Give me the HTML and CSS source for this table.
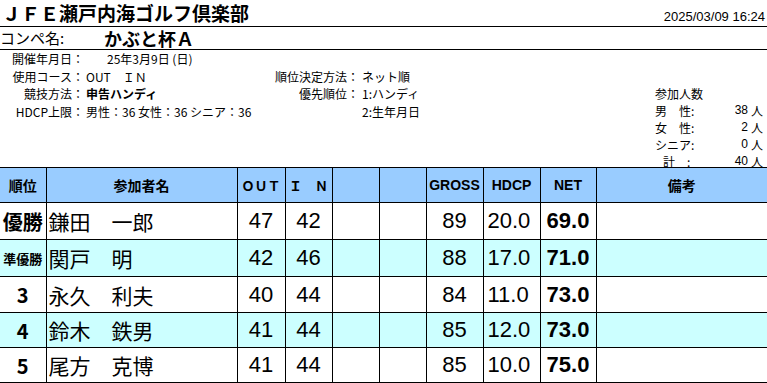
FILE: index.html
```html
<!DOCTYPE html>
<html lang="ja">
<head>
<meta charset="utf-8">
<title>かぶと杯Ａ 成績表</title>
<link rel="stylesheet" href="styles.css">
</head>
<body>
<div class="page">
  <header class="top">
    <h1 class="club">ＪＦＥ瀬戸内海ゴルフ倶楽部</h1>
    <div class="stamp">2025/03/09 16:24</div>
  </header>
  <div class="comp">
    <span class="comp-label">コンペ名:</span>
    <span class="comp-name">かぶと杯Ａ</span>
  </div>
  <section class="info">
    <div class="info-grid">
      <div class="lbl">開催年月日：</div><div class="val val-date">25年3月9日 (日)</div><div></div><div></div>
      <div class="lbl">使用コース：</div><div class="val">OUT　ＩＮ</div><div class="lbl">順位決定方法：</div><div class="val2">ネット順</div>
      <div class="lbl">競技方法：</div><div class="val strong">申告ハンディ</div><div class="lbl">優先順位：</div><div class="val2">1:ハンディ</div>
      <div class="lbl">HDCP上限：</div><div class="val">男性：36 女性：36 シニア：36</div><div></div><div class="val2">2:生年月日</div>
    </div>
    <div class="count">
      <div class="count-title">参加人数</div>
      <div class="count-row"><span class="ck">男　性:</span><span class="cn">38</span><span class="cu">人</span></div>
      <div class="count-row"><span class="ck">女　性:</span><span class="cn">2</span><span class="cu">人</span></div>
      <div class="count-row"><span class="ck">シニア:</span><span class="cn">0</span><span class="cu">人</span></div>
      <div class="count-row"><span class="ck ck-total">計　:</span><span class="cn">40</span><span class="cu">人</span></div>
    </div>
  </section>
  <table class="result">
    <colgroup>
      <col class="c-rank"><col class="c-name"><col class="c-out"><col class="c-in"><col class="c-x"><col class="c-x">
      <col class="c-gross"><col class="c-hdcp"><col class="c-net"><col class="c-note">
    </colgroup>
    <thead>
      <tr>
        <th>順位</th><th>参加者名</th><th class="fw">ＯＵＴ</th><th class="fw">Ｉ　Ｎ</th><th></th><th></th>
        <th class="lat">GROSS</th><th class="lat">HDCP</th><th class="lat">NET</th><th class="note">備考</th>
      </tr>
    </thead>
    <tbody>
      <tr>
        <td class="rank">優勝</td><td class="name">鎌田　一郎</td><td class="num">47</td><td class="num">42</td><td></td><td></td>
        <td class="num">89</td><td class="hdcp">20.0</td><td class="net">69.0</td><td class="note"></td>
      </tr>
      <tr class="alt">
        <td class="rank rank-sm">準優勝</td><td class="name">関戸　明</td><td class="num">42</td><td class="num">46</td><td></td><td></td>
        <td class="num">88</td><td class="hdcp">17.0</td><td class="net">71.0</td><td class="note"></td>
      </tr>
      <tr>
        <td class="rank">3</td><td class="name">永久　利夫</td><td class="num">40</td><td class="num">44</td><td></td><td></td>
        <td class="num">84</td><td class="hdcp">11.0</td><td class="net">73.0</td><td class="note"></td>
      </tr>
      <tr class="alt">
        <td class="rank">4</td><td class="name">鈴木　鉄男</td><td class="num">41</td><td class="num">44</td><td></td><td></td>
        <td class="num">85</td><td class="hdcp">12.0</td><td class="net">73.0</td><td class="note"></td>
      </tr>
      <tr>
        <td class="rank">5</td><td class="name">尾方　克博</td><td class="num">41</td><td class="num">44</td><td></td><td></td>
        <td class="num">85</td><td class="hdcp">10.0</td><td class="net">75.0</td><td class="note"></td>
      </tr>
    </tbody>
  </table>
</div>
</body>
</html>
```

FILE: styles.css
```css
html, body {
  margin: 0;
  padding: 0;
  background: #fff;
  overflow: hidden;
}
body {
  font-family: "Liberation Sans", "Noto Sans CJK JP", sans-serif;
  color: #000;
}
.page {
  width: 767px;
}

/* title row */
.top {
  display: flex;
  justify-content: space-between;
  align-items: flex-end;
  height: 26px;
  border-bottom: 1px solid #000;
}
.club {
  margin: 0 0 0 2px;
  font: bold 19px/26px "Noto Sans CJK JP", sans-serif;
  align-self: center;
}
.stamp {
  font-size: 13px;
  line-height: 15px;
  margin: 0 2px 2px 0;
}

/* competition name */
.comp {
  display: flex;
  align-items: center;
  height: 22px;
  border-bottom: 1px solid #000;
}
.comp-label {
  width: 104px;
  font: 15px/20px "Noto Sans CJK JP", sans-serif;
}
.comp-name {
  font: bold 18px/20px "Noto Sans CJK JP", sans-serif;
}

/* info block */
.info {
  display: flex;
  height: 117px;
  font-size: 12px;
  font-family: "Noto Sans CJK JP", sans-serif;
}
.info-grid {
  flex: 1;
  display: grid;
  grid-template-columns: 84px 191px 84px 1fr;
  grid-auto-rows: 17.5px;
  align-items: center;
  line-height: 15px;
  white-space: nowrap;
}
.lbl {
  text-align: right;
}
.val {
  padding-left: 2px;
}
.val-date {
  padding-left: 23px;
}
.val2 {
  padding-left: 3px;
}
.strong {
  font-weight: bold;
}

.count {
  width: 112px;
  margin-top: 35px;
  line-height: 17px;
}
.count-row {
  display: flex;
}
.ck {
  width: 48px;
}
.ck-total {
  padding-left: 8px;
  width: 40px;
}
.cn {
  width: 45px;
  text-align: right;
  font-family: "Liberation Sans", sans-serif;
}
.cu {
  padding-left: 3px;
}

/* results table */
.result {
  width: 767px;
  border-collapse: collapse;
  table-layout: fixed;
}
.c-rank { width: 46px; }
.c-name { width: 191px; }
.c-out { width: 48px; }
.c-in { width: 47px; }
.c-x { width: 47px; }
.c-gross { width: 57px; }
.c-hdcp { width: 57px; }
.c-net { width: 56px; }

.result th,
.result td {
  border: 1px solid #000;
  padding: 0;
  overflow: hidden;
  white-space: nowrap;
}
.result th:first-child,
.result td:first-child {
  border-left: none;
}
.result th:last-child,
.result td:last-child {
  border-right: none;
}
.result thead tr {
  height: 35px;
  background: #99ccff;
}
.result th {
  font: bold 14px "Noto Sans CJK JP", sans-serif;
  text-align: center;
}
.result th.fw {
  font-size: 13px;
}
.result th.lat {
  font-family: "Liberation Sans", sans-serif;
}
.result tbody tr {
  height: 36px;
}
.result tbody tr:nth-child(-n+2) {
  height: 37px;
}
.result tbody tr:nth-child(n+4) {
  height: 35px;
}
.result tr.alt {
  background: #ccffff;
}
.rank {
  text-align: center;
  font: bold 20px "Noto Sans CJK JP", sans-serif;
}
td.rank-sm {
  font-size: 13px;
}
.result td.name {
  font: 21px "Noto Sans CJK JP", sans-serif;
  padding-left: 2px;
}
.num {
  text-align: center;
  font-size: 22px;
}
.result td.hdcp {
  font-size: 22px;
  padding-left: 4px;
}
.net {
  text-align: center;
  font-size: 22px;
  font-weight: bold;
}
```
